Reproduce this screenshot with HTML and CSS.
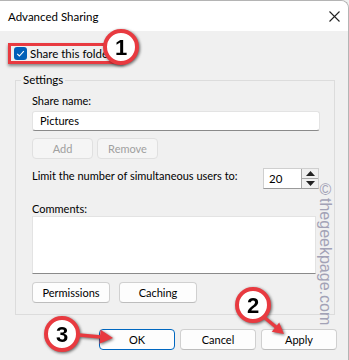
FILE: index.html
```html
<!DOCTYPE html>
<html>
<head>
  <title>Advanced Sharing</title>
  <link rel="stylesheet" href="styles.css">
</head>
<body>
  <div class="window">
    <div class="titlebar">
      <span class="title">Advanced Sharing</span>
      <svg class="close" width="11" height="11" viewBox="0 0 11 11">
        <path d="M0.5 0.5 L10.5 10.5 M10.5 0.5 L0.5 10.5" stroke="#222" stroke-width="1.1" fill="none"/>
      </svg>
    </div>

    <div class="body">
      <label class="share-row">
        <span class="checkbox">
          <svg width="13" height="13" viewBox="0 0 13 13">
            <path d="M3.2 6.8 L5.4 9 L9.8 4.2" stroke="#fff" stroke-width="1.1" fill="none"/>
          </svg>
        </span>
        <span class="share-text">Share this folder</span>
      </label>

      <fieldset class="settings">
        <legend>Settings</legend>
        <div class="label">Share name:</div>
        <div class="input">Pictures</div>
        <div class="btn-row">
          <button class="btn small" disabled>Add</button>
          <button class="btn small" disabled>Remove</button>
        </div>
        <div class="limit-row">
          <span>Limit the number of simultaneous users to:</span>
          <div class="spinner">
            <span class="spin-value">20</span>
            <div class="spin-btns">
              <span class="spin-btn"><svg width="9" height="5" viewBox="0 0 9 5"><path d="M4.5 0 L9 5 L0 5 Z" fill="#222"/></svg></span>
              <span class="spin-btn"><svg width="9" height="5" viewBox="0 0 9 5"><path d="M0 0 L9 0 L4.5 5 Z" fill="#222"/></svg></span>
            </div>
          </div>
        </div>
        <div class="label comments-label">Comments:</div>
        <div class="textarea"></div>
        <div class="btn-row wide-gap">
          <button class="btn perm">Permissions</button>
          <button class="btn perm">Caching</button>
        </div>
      </fieldset>

      <div class="dialog-buttons">
        <button class="btn dlg default">OK</button>
        <button class="btn dlg">Cancel</button>
        <button class="btn dlg">Apply</button>
      </div>
    </div>

    <div class="watermark">&copy;thegeekpage.com</div>

    <svg class="annotations" width="349" height="360" viewBox="0 0 349 360">
      <g class="mark">
        <circle cx="121" cy="47" r="16" fill="#fff" stroke="#e83a40" stroke-width="4"/>
        <text x="121" y="55" class="num">1</text>
      </g>
      <g class="mark">
        <line x1="265" y1="318" x2="276" y2="327" stroke="#e83a40" stroke-width="3.5"/>
        <polygon points="284,334 271.7,331.8 279.2,322.4" fill="#e83a40"/>
        <circle cx="253" cy="305" r="16" fill="#fff" stroke="#e83a40" stroke-width="4"/>
        <text x="253" y="313" class="num">2</text>
      </g>
      <g class="mark">
        <line x1="79" y1="335" x2="101" y2="337" stroke="#e83a40" stroke-width="3.5"/>
        <polygon points="113,338 100.6,329.8 99.4,343.8" fill="#e83a40"/>
        <circle cx="62" cy="334" r="16" fill="#fff" stroke="#e83a40" stroke-width="4"/>
        <text x="62" y="342" class="num">3</text>
      </g>
    </svg>
  </div>
</body>
</html>
```

FILE: styles.css
```css
body {
  margin: 0;
  font-family: Lato, "Noto Sans", sans-serif;
  font-size: 11px;
  color: #000;
  background-color: #f0f0f0;
}

.window {
  position: relative;
  width: 348px;
  height: 359px;
  border-top: 1px solid #b4b4b4;
  border-right: 1px solid #b4b4b4;
  border-top-right-radius: 8px;
  background-color: #f0f0f0;
  overflow: hidden;
}

.titlebar {
  display: flex;
  align-items: center;
  height: 30px;
  padding-left: 8px;
  background-color: #fff;
}

.title {
  font-size: 11.5px;
}

.close {
  margin-left: auto;
  margin-right: 8px;
}

.body {
  display: flex;
  flex-direction: column;
}

.share-row {
  display: flex;
  align-items: center;
  gap: 3px;
  width: 104px;
  height: 15px;
  margin: 12px 0 0 8px;
  padding: 0 3px;
  border: 3px solid #e83a40;
  white-space: nowrap;
  overflow: hidden;
  box-shadow: 0 2px 3px rgba(0, 0, 0, 0.45);
}

.share-text {
  font-size: 11.5px;
}

.checkbox {
  display: flex;
  width: 13px;
  height: 13px;
  border-radius: 3px;
  background-color: #005fb8;
  flex-shrink: 0;
}

.settings {
  width: 288px;
  margin: 8px 0 0 15px;
  padding: 0 14px 11px 16px;
  border: 1px solid #dcdcdc;
  min-width: 0;
}

.settings legend {
  margin-left: -11px;
  padding: 0 2px;
  line-height: 16px;
  font-size: 11.5px;
}

.label {
  margin-top: 5px;
  line-height: 16px;
}

.input {
  box-sizing: border-box;
  height: 20px;
  margin-top: 2px;
  padding: 0 7px;
  line-height: 18px;
  background-color: #fff;
  border: 1px solid #e3e3e3;
  border-bottom-color: #8a8a8a;
  border-radius: 3px;
}

.btn-row {
  display: flex;
  gap: 4px;
  margin-top: 7px;
}

.btn {
  box-sizing: border-box;
  height: 21px;
  padding: 0;
  font-family: Lato, "Noto Sans", sans-serif;
  font-size: 11px;
  color: #000;
  background-color: #fdfdfd;
  border: 1px solid #d0d0d0;
  border-bottom-color: #bdbdbd;
  border-radius: 4px;
}

.btn:disabled {
  color: #a0a0a0;
  background-color: #f5f5f5;
  border-color: #e0e0e0;
}

.small {
  width: 61px;
}

.limit-row {
  display: flex;
  justify-content: space-between;
  align-items: flex-start;
  margin-top: 9px;
  padding-right: 1px;
  line-height: 16px;
  white-space: nowrap;
}

.spinner {
  box-sizing: border-box;
  display: flex;
  width: 56px;
  height: 21px;
  background-color: #fff;
  border: 1px solid #cfcfcf;
  border-bottom-color: #9a9a9a;
}

.spin-value {
  flex: 1;
  padding-left: 5px;
  line-height: 19px;
  font-size: 11.5px;
}

.spin-btns {
  display: flex;
  flex-direction: column;
  width: 16px;
  border-left: 1px solid #a8a8a8;
}

.spin-btn {
  display: flex;
  flex: 1;
  align-items: center;
  justify-content: center;
  background-color: #f0f0f0;
}

.spin-btn + .spin-btn {
  border-top: 1px solid #a8a8a8;
}

.comments-label {
  margin-top: 13px;
  line-height: 14px;
}

.textarea {
  box-sizing: border-box;
  width: 284px;
  height: 58px;
  background-color: #fff;
  border: 1px solid #e3e3e3;
  border-bottom-color: #8a8a8a;
}

.wide-gap {
  gap: 9px;
  margin-top: 8px;
}

.perm {
  width: 78px;
}

.dialog-buttons {
  display: flex;
  gap: 5px;
  margin: 14px 0 0 99px;
}

.dlg {
  width: 76px;
}

.default {
  border: 1px solid #0067c0;
}

.watermark {
  position: absolute;
  left: 318px;
  top: 180px;
  writing-mode: vertical-rl;
  font-family: "Liberation Sans", sans-serif;
  font-size: 16px;
  line-height: 14px;
  color: #a2a2b6;
}

.annotations {
  position: absolute;
  left: 0;
  top: -1px;
  pointer-events: none;
}

.mark {
  filter: drop-shadow(1px 1px 1.5px rgba(0, 0, 0, 0.6));
}

.num {
  font-family: "Liberation Sans", sans-serif;
  font-size: 22px;
  font-weight: bold;
  text-anchor: middle;
  fill: #000;
}
```
